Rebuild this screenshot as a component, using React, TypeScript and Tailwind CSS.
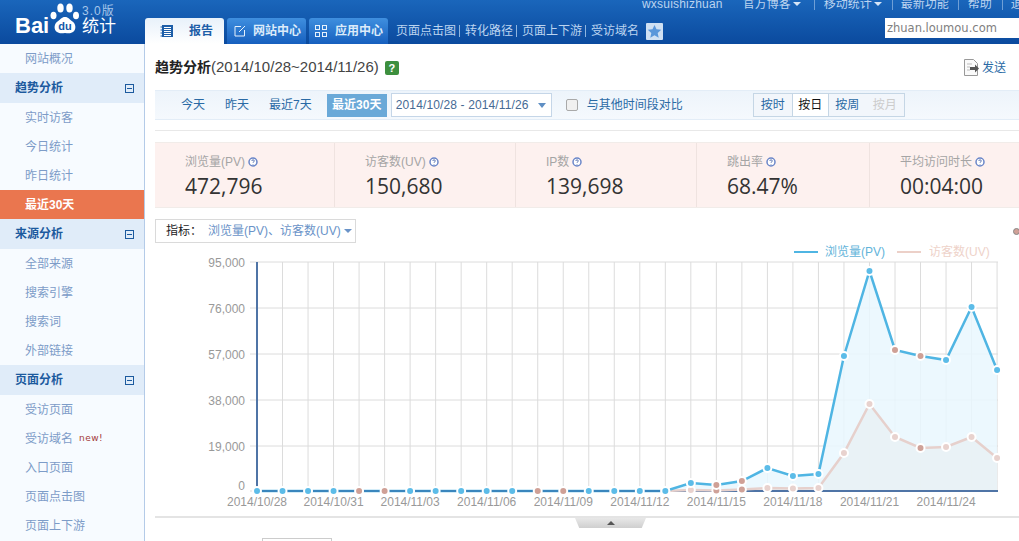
import React from "react"

const base = "font-['Liberation_Sans','Noto_Sans_CJK_SC',sans-serif]"

const px = (i: number) => 257 + i * 25.52

// y position of every day, read off the chart
const pv = [491, 491, 491, 491, 491, 491, 491, 491, 491, 491, 491, 491, 491, 491, 491, 491, 491, 483, 485, 481, 468, 476, 474, 356, 271, 350, 356, 360, 307, 370]
const uv: (number | null)[] = [null, null, null, null, null, null, null, null, null, null, null, null, null, null, null, null, 491, 490, 490.5, 489.5, 488, 488.5, 488, 453, 404, 437, 448, 447, 437, 458]
const pinkPv = [4, 5, 11, 12, 18, 19, 25, 26]
const darkUv = [18, 19, 26]

const yTicks: [string, number, number][] = [["95,000", 262, 267], ["76,000", 308, 313], ["57,000", 354, 359], ["38,000", 400, 405], ["19,000", 446, 451], ["0", 491, 490]]
const xLabels: [string, number][] = [["2014/10/28", 0], ["2014/10/31", 3], ["2014/11/03", 6], ["2014/11/06", 9], ["2014/11/09", 12], ["2014/11/12", 15], ["2014/11/15", 18], ["2014/11/18", 21], ["2014/11/21", 24], ["2014/11/24", 27]]

function Chart() {
    const pvLine = pv.map((y, i) => `${px(i)},${y}`).join(" ")
    const uvPts = uv.map((y, i) => (y === null ? null : `${px(i)},${y}`)).filter(Boolean).join(" ")
    return (
        <svg width={864} height={273} viewBox="155 243 864 273" className="block shrink-0">
            {Array.from({ length: 29 }).map((_, i) => (
                <line key={i} x1={px(i + 1)} x2={px(i + 1)} y1={262} y2={491} stroke="#dcdcdc" strokeWidth={1} />
            ))}
            {yTicks.map(([label, y, base]) => (
                <g key={label}>
                    <line x1={250} x2={998} y1={y} y2={y} stroke="#dcdcdc" strokeWidth={1} />
                    <text x={245} y={base} textAnchor="end" fontSize={12} fill="#999" fontFamily="Liberation Sans">{label}</text>
                </g>
            ))}
            <polygon points={`${px(16)},491 ${pvLine.split(" ").slice(17).join(" ")} 997,491`} fill="#e9f7fe" fillOpacity={0.85} />
            <polygon points={`${px(16)},491 ${uvPts.split(" ").slice(1).join(" ")} 997,491`} fill="#e9f1f5" fillOpacity={0.85} />
            <line x1={257} x2={257} y1={262} y2={491} stroke="#4f74a6" strokeWidth={2} />
            <line x1={257} x2={998} y1={491} y2={491} stroke="#4f74a6" strokeWidth={2} />
            <polyline points={uvPts} fill="none" stroke="#e6d0cc" strokeWidth={2.5} />
            <polyline points={pvLine} fill="none" stroke="#4fb5e3" strokeWidth={2.5} />
            <line x1={257} x2={px(16)} y1={491} y2={491} stroke="#3a86bd" strokeWidth={2} />
            {uv.map((y, i) =>
                y === null ? null : (
                    <circle key={i} cx={px(i)} cy={y} r={4} fill={darkUv.includes(i) ? "#cfa299" : "#e8d2ce"} stroke="#fff" strokeWidth={2} />
                ),
            )}
            {pv.map((y, i) => (
                <circle key={i} cx={px(i)} cy={y} r={4} fill={pinkPv.includes(i) ? "#cfa096" : "#5cbce8"} stroke="#fff" strokeWidth={2} />
            ))}
            {xLabels.map(([label, i]) => (
                <text key={label} x={px(i)} y={506} textAnchor="middle" fontSize={12} fill="#999" fontFamily="Liberation Sans">{label}</text>
            ))}
            <line x1={794} x2={818} y1={252} y2={252} stroke="#4fb5e3" strokeWidth={2} />
            <text x={825} y={256} fontSize={12} fill="#62b4da" fontFamily="Liberation Sans, Noto Sans CJK SC">浏览量(PV)</text>
            <line x1={897} x2={921} y1={252} y2={252} stroke="#ecd0c8" strokeWidth={2} />
            <text x={929} y={256} fontSize={12} fill="#eed2c9" fontFamily="Liberation Sans, Noto Sans CJK SC">访客数(UV)</text>
        </svg>
    )
}

function Logo() {
    return (
        <div className="relative w-[145px] h-[44px] shrink-0">
            <span className="absolute left-[15px] top-[13px] text-[22px] leading-[26px] font-bold text-white font-['Liberation_Sans',sans-serif]">Bai</span>
            <svg className="absolute left-[50px] top-[2px]" width={30} height={34} viewBox="0 0 30 34">
                <ellipse cx="3.5" cy="13.5" rx="3" ry="3.8" fill="#fff" />
                <ellipse cx="10.5" cy="6" rx="3.2" ry="4.6" fill="#fff" />
                <ellipse cx="19.5" cy="6" rx="3.2" ry="4.6" fill="#fff" />
                <ellipse cx="26" cy="13.5" rx="3" ry="3.8" fill="#fff" />
                <path d="M15 15c3.500 0 4.500 2.500 7.500 4.500 3.500 2.300 4 8 .5 10.500-3 2-5.500 1-8 1s-5 1-8-1c-3.500-2.500-3-8.200 .5-10.500 3-2 4-4.500 7.500-4.500z" fill="#fff" />
                <text x="15" y="28" textAnchor="middle" fontSize={11} fontWeight={700} fill="#1458a8" fontFamily="Liberation Sans">du</text>
            </svg>
            <span className={`absolute left-[82px] top-[4px] text-[12px] leading-[14px] text-[#a5c6ea] tracking-[1px] ${base}`}>3.0版</span>
            <span className={`absolute left-[82px] top-[17px] text-[17px] leading-[20px] text-white ${base}`}>统计</span>
        </div>
    )
}

function TabIcon({ kind }: { kind: string }) {
    if (kind === "book")
        return (
            <svg width={14} height={14} viewBox="0 0 14 14">
                <rect x="2" y="1" width="11" height="12" fill="#1d5ea8" />
                <path d="M4 3.500h7M4 5.500h7M4 7.500h7M4 9.500h7M4 11.500h7" stroke="#fff" strokeWidth={1} />
                <path d="M0.500 3h2M0.500 6h2M0.500 9h2M0.500 12h2" stroke="#1d5ea8" strokeWidth={1} />
            </svg>
        )
    if (kind === "edit")
        return (
            <svg width={12} height={12} viewBox="0 0 12 12" fill="none" stroke="#e6f1fc" strokeWidth={1}>
                <path d="M7 1.500H1v9.500h9.500V5" />
                <path d="M5 7l6-6" />
            </svg>
        )
    return (
        <svg width={12} height={12} viewBox="0 0 12 12" fill="none" stroke="#e6f1fc" strokeWidth={1}>
            <rect x="0.500" y="0.500" width="4" height="4" />
            <rect x="7.500" y="0.500" width="4" height="4" />
            <rect x="0.500" y="7.500" width="4" height="4" />
            <rect x="7.500" y="7.500" width="4" height="4" />
        </svg>
    )
}

function Header() {
    const sep = <span className="w-px h-[12px] bg-[#6f9fd6]" />
    return (
        <div className="flex h-[44px] shrink-0 overflow-hidden bg-gradient-to-b from-[#1a66bb] to-[#0b4a9e]">
            <Logo />
            <div className="flex-1 min-w-0 flex flex-col">
                <div className="h-[18px] flex items-center pl-[497px] -mt-[5px] text-[12px] leading-[18px] text-[#bcd4f0] whitespace-nowrap">
                    <span className="tracking-[0.2px]">wxsuishizhuan</span>
                    <span className="ml-[20px]">官方博客</span>
                    <span className="ml-[2px] border-x-[4px] border-t-[4px] border-x-transparent border-t-[#d6e5f7]" />
                    <span className="ml-[13px] flex">{sep}</span>
                    <span className="ml-[9px]">移动统计</span>
                    <span className="ml-[2px] border-x-[4px] border-t-[4px] border-x-transparent border-t-[#d6e5f7]" />
                    <span className="ml-[10px] flex">{sep}</span>
                    <span className="ml-[8px]">最新功能</span>
                    <span className="ml-[9px] flex">{sep}</span>
                    <span className="ml-[9px]">帮助</span>
                    <span className="ml-[10px] flex">{sep}</span>
                    <span className="ml-[8px]">退出</span>
                </div>
                <div className="flex items-end h-[31px] relative">
                    <div className="w-[79px] h-[26px] rounded-t-[3px] bg-gradient-to-b from-[#e8f1fa] to-white flex items-center pl-[15px] gap-[15px] text-[12px] font-bold text-[#1d5ea8]">
                        <TabIcon kind="book" />
                        <span>报告</span>
                    </div>
                    <div className="ml-[3px] w-[79px] h-[26px] rounded-t-[3px] bg-gradient-to-b from-[#3f8fdf] to-[#165fbe] flex items-center pl-[7px] gap-[7px] text-[12px] font-bold text-[#dcebfa]">
                        <TabIcon kind="edit" />
                        <span>网站中心</span>
                    </div>
                    <div className="ml-[3px] w-[79px] h-[26px] rounded-t-[3px] bg-gradient-to-b from-[#3f8fdf] to-[#165fbe] flex items-center pl-[6px] gap-[8px] text-[12px] font-bold text-[#dcebfa]">
                        <TabIcon kind="grid" />
                        <span>应用中心</span>
                    </div>
                    <div className="ml-[8px] h-[26px] flex items-center text-[12px] text-[#bcd4f0] whitespace-nowrap">
                        <span>页面点击图</span>
                        <span className="ml-[3px] mr-[5px] w-px h-[12px] bg-[#8fb5e0]" />
                        <span>转化路径</span>
                        <span className="ml-[3px] mr-[5px] w-px h-[12px] bg-[#8fb5e0]" />
                        <span>页面上下游</span>
                        <span className="ml-[3px] mr-[5px] w-px h-[12px] bg-[#8fb5e0]" />
                        <span>受访域名</span>
                        <span className="ml-[7px] w-[17px] h-[17px] bg-[#cfe0f3] rounded-[1px] flex items-center justify-center">
                            <svg width={15} height={15} viewBox="0 0 24 24"><path d="M12 1.500l3.200 7 7.600.8-5.700 5.100 1.600 7.500L12 18l-6.700 3.900 1.600-7.500L1.200 9.300l7.600-.8z" fill="#5a97da" /></svg>
                        </span>
                    </div>
                    <div className="absolute left-[740px] top-[5px] w-[134px] h-[20px] bg-white pl-[2px] text-[11.5px] leading-[20px] text-[#808080] font-['DejaVu_Sans',sans-serif]">
                        zhuan.loumou.com
                    </div>
                </div>
            </div>
        </div>
    )
}

function SideItem({ label, active, badge }: { label: string; active?: boolean; badge?: boolean }) {
    return (
        <div className={`h-[29px] flex items-center pl-[25px] text-[12px] ${active ? "bg-[#ea764f] text-white font-bold" : "text-[#7d9cc8]"}`}>
            <span>{label}</span>
            {badge && <span className="ml-[6px] text-[9px] tracking-[0.5px] text-[#a33a3a] font-['DejaVu_Sans',sans-serif]">new!</span>}
        </div>
    )
}

function SideHead({ label }: { label: string }) {
    return (
        <div className="h-[30px] flex items-center justify-between pl-[15px] pr-[10px] bg-[#e0ecf9] text-[12px] font-bold text-[#1c5a9e]">
            <span>{label}</span>
            <span className="w-[9px] h-[9px] border border-[#1c5a9e] flex items-center justify-center">
                <span className="w-[5px] h-px bg-[#1c5a9e]" />
            </span>
        </div>
    )
}

function Sidebar() {
    return (
        <div className="w-[145px] shrink-0 bg-[#f7fbff] border-r border-[#b4cbe8]">
            <SideItem label="网站概况" />
            <SideHead label="趋势分析" />
            <SideItem label="实时访客" />
            <SideItem label="今日统计" />
            <SideItem label="昨日统计" />
            <SideItem label="最近30天" active />
            <SideHead label="来源分析" />
            <SideItem label="全部来源" />
            <SideItem label="搜索引擎" />
            <SideItem label="搜索词" />
            <SideItem label="外部链接" />
            <SideHead label="页面分析" />
            <SideItem label="受访页面" />
            <SideItem label="受访域名" badge />
            <SideItem label="入口页面" />
            <SideItem label="页面点击图" />
            <SideItem label="页面上下游" />
        </div>
    )
}

function Stat({ label, value, w }: { label: string; value: string; w: string }) {
    return (
        <div className={`${w} shrink-0 h-full pl-[30px] pt-[11px] border-r border-[#efe3e0] last:border-r-0`}>
            <div className="h-[16px] flex items-center text-[12px] text-[#a5a5a5]">
                <span>{label}</span>
                <svg className="ml-[3px]" width={10} height={10} viewBox="0 0 10 10">
                    <circle cx="5" cy="5" r="4" fill="#fff" stroke="#6a86c8" strokeWidth={1.500} />
                    <path d="M3.800 4c0-1.600 2.500-1.600 2.500 0 0 .9-1.300 .9-1.300 1.800M5 7v.6" fill="none" stroke="#4a66a8" strokeWidth={0.900} />
                </svg>
            </div>
            <div className="mt-[3px] text-[21px] leading-[26px] text-[#333] font-['Open_Sans',sans-serif]">{value}</div>
        </div>
    )
}

function Toolbar() {
    return (
        <div className="mt-[13px] h-[30px] shrink-0 flex items-center bg-gradient-to-b from-[#edf4fb] to-[#f5f9fd] border-y border-[#e3edf7] text-[12px] text-[#2a6aa5]">
            <span className="ml-[26px]">今天</span>
            <span className="ml-[20px]">昨天</span>
            <span className="ml-[20px]">最近7天</span>
            <span className="ml-[15px] w-[60px] h-[23px] bg-[#6aa9d8] text-white font-bold flex items-center justify-center">最近30天</span>
            <div className="ml-[4px] w-[161px] h-[24px] bg-white border border-[#c5d6e8] flex items-center pl-[4px] text-[#466a94] tracking-[0.13px]">
                <span>2014/10/28 - 2014/11/26</span>
                <span className="ml-[9px] border-x-[4px] border-t-[5px] border-x-transparent border-t-[#5f8fc4]" />
            </div>
            <span className="ml-[14px] w-[12px] h-[12px] rounded-[2px] border border-[#a9a9a9] bg-[#f0f0f0]" />
            <span className="ml-[9px]">与其他时间段对比</span>
            <div className="ml-[70px] w-[152px] h-[24px] flex border border-[#c5d6e5] bg-[#f2f6fb] text-[12px]">
                <span className="w-[38px] flex items-center justify-center">按时</span>
                <span className="w-[37px] flex items-center justify-center bg-white text-[#111] border-x border-[#c5d6e5]">按日</span>
                <span className="w-[37px] flex items-center justify-center">按周</span>
                <span className="w-[38px] flex items-center justify-center text-[#ccc]">按月</span>
            </div>
        </div>
    )
}

export default function App() {
    return (
        <div className={`relative w-[1019px] h-[541px] overflow-hidden bg-white flex flex-col ${base}`}>
            <Header />
            <div className="flex flex-1 min-h-0">
                <Sidebar />
                <div className="flex-1 min-w-0 pl-[10px] flex flex-col">
                    <div className="h-[33px] shrink-0 pt-[14px] flex items-center text-[15px] text-[#444]">
                        <span className="font-bold text-[#222] text-[14px]">趋势分析</span>
                        <span>(2014/10/28~2014/11/26)</span>
                        <span className="ml-[6px] w-[14px] h-[14px] rounded-[2px] bg-[#3d8f3e] text-white text-[11px] leading-[14px] font-bold text-center">?</span>
                        <span className="ml-auto mr-[13px] flex items-center gap-[3px] text-[12px] text-[#2a6aa5]">
                            <svg width={15} height={17} viewBox="0 0 15 17" fill="none">
                                <path d="M0.500 0.500h9l4 4v12h-13z" stroke="#999" fill="#fafafa" />
                                <path d="M3 5h5M3 8h3M3 11h3" stroke="#bbb" />
                                <path d="M6 8h5V5.500l4 4-4 4V11H6z" fill="#555" />
                            </svg>
                            发送
                        </span>
                    </div>
                    <Toolbar />
                    <div className="mt-[10px] h-px shrink-0 bg-[#e8e8e8]" />
                    <div className="mt-[11px] h-[66px] shrink-0 flex items-stretch bg-[#fdf1ef] border-y border-[#f1ece9]">
                        <Stat label="浏览量(PV)" value="472,796" w="w-[180px]" />
                        <Stat label="访客数(UV)" value="150,680" w="w-[181px]" />
                        <Stat label="IP数" value="139,698" w="w-[181px]" />
                        <Stat label="跳出率" value="68.47%" w="w-[173px]" />
                        <Stat label="平均访问时长" value="00:04:00" w="w-[149px]" />
                    </div>
                    <div className="mt-[11px] w-[201px] h-[24px] border border-[#dadada] flex items-center pl-[10px] text-[12px] whitespace-nowrap shrink-0">
                        <span className="text-[#222]">指标：</span>
                        <span className="ml-[6px] text-[#6a93c8]">浏览量(PV)、访客数(UV)</span>
                        <span className="ml-[3px] border-x-[4px] border-t-[4px] border-x-transparent border-t-[#6a93c8]" />
                    </div>
                    <Chart />
                    <div className="h-[2px] bg-[#e4e4e4] shrink-0" />
                    <div className="relative h-[23px] shrink-0">
                        <div className="absolute left-[420px] top-0 w-[71px] h-[10px] bg-gradient-to-b from-[#e8e8e8] to-[#cfcfcf] [clip-path:polygon(0_0,100%_0,94%_100%,6%_100%)] flex items-center justify-center">
                            <span className="border-x-[4px] border-b-[4px] border-x-transparent border-b-[#555]" />
                        </div>
                        <div className="absolute left-[107px] top-[20px] w-[70px] h-[10px] border border-[#ccc] bg-white" />
                    </div>
                </div>
            </div>
            <span className="absolute left-[1013px] top-[228px] w-[7px] h-[7px] rounded-full bg-[#cfa096] border border-[#888]" />
        </div>
    )
}
